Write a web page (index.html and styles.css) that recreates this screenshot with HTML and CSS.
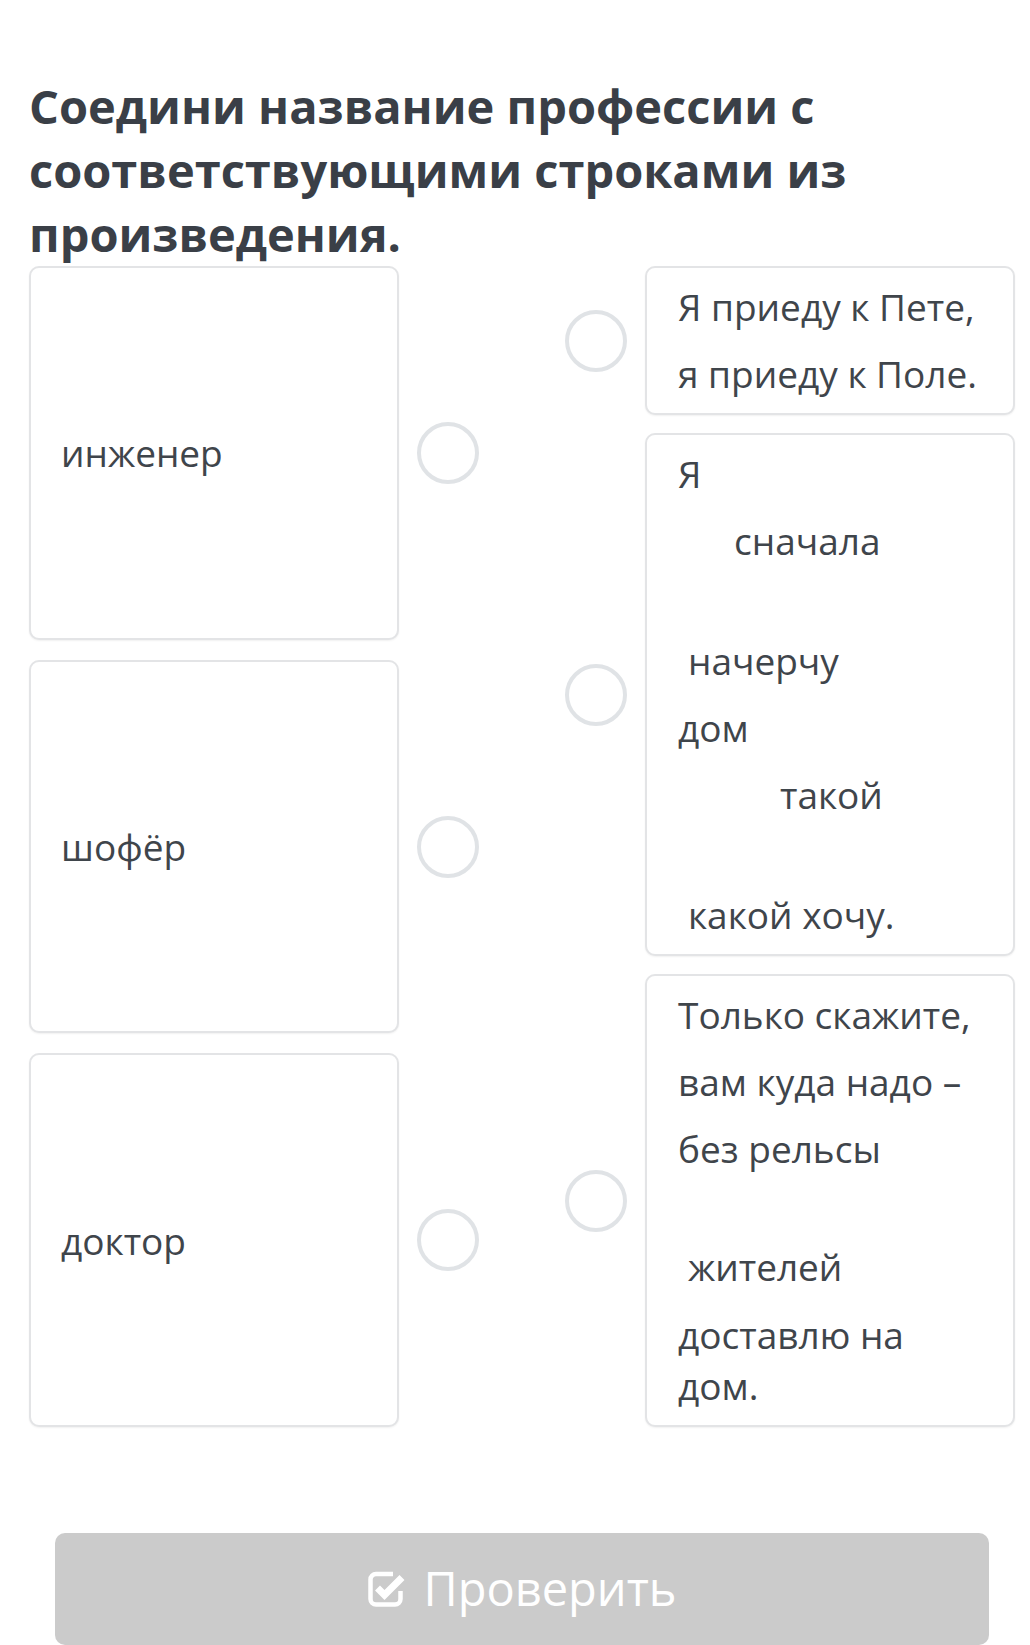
FILE: index.html
```html
<!DOCTYPE html>
<html lang="ru">
<head>
<meta charset="utf-8">
<title>Соедини</title>
<link rel="stylesheet" href="styles.css">
</head>
<body>
<div class="page">
  <h1 class="title">Соедини название профессии с соответствующими строками из произведения.</h1>
  <div class="match">
    <div class="col col-left">
      <div class="item">
        <div class="card card-left"><span>инженер</span></div>
        <div class="dot"></div>
      </div>
      <div class="item">
        <div class="card card-left"><span>шофёр</span></div>
        <div class="dot"></div>
      </div>
      <div class="item">
        <div class="card card-left"><span>доктор</span></div>
        <div class="dot"></div>
      </div>
    </div>
    <div class="col col-right">
      <div class="item">
        <div class="dot dot-r"></div>
        <div class="card card-right">
          <p class="ln">Я приеду к Пете,</p>
          <p class="ln">я приеду к Поле.</p>
        </div>
      </div>
      <div class="item">
        <div class="dot dot-r"></div>
        <div class="card card-right">
          <p class="ln">Я</p>
          <p class="ln ind-l gap">сначала</p>
          <p class="ln ind-s">начерчу</p>
          <p class="ln">дом</p>
          <p class="ln ind-xl gap">такой</p>
          <p class="ln ind-s">какой хочу.</p>
        </div>
      </div>
      <div class="item">
        <div class="dot dot-r"></div>
        <div class="card card-right">
          <p class="ln">Только скажите,</p>
          <p class="ln">вам куда надо –</p>
          <p class="ln gap2">без рельсы</p>
          <p class="ln ind-s">жителей</p>
          <p class="ln wrap">доставлю на дом.</p>
        </div>
      </div>
    </div>
  </div>
  <button class="check" type="button">
    <svg class="check-icon" width="40" height="38" viewBox="0 0 40 38" aria-hidden="true">
      <path d="M26 4 H9 a5.5 5.5 0 0 0 -5.5 5.5 V29 a5.5 5.5 0 0 0 5.5 5.5 H28 a5.5 5.5 0 0 0 5.5 -5.5 V21" fill="none" stroke="#fff" stroke-width="4.5"/>
      <path d="M10.5 18 L17.5 25 L35 7.5" fill="none" stroke="#fff" stroke-width="7" stroke-linecap="butt" stroke-linejoin="miter"/>
    </svg>
    <span>Проверить</span>
  </button>
</div>
</body>
</html>
```

FILE: styles.css
```css
* { box-sizing: border-box; }
html, body { margin: 0; padding: 0; background: #fff; }
body {
  font-family: "Open Sans", "Noto Sans", "DejaVu Sans", sans-serif;
  color: #3f454b;
}
.page {
  padding: 74px 15px 0 29px;
  width: 1030px;
}
.title {
  margin: 0;
  font-size: 47px;
  line-height: 64px;
  font-weight: 700;
  color: #3a3f47;
  width: 920px;
}
.match {
  display: flex;
  gap: 86px;
  align-items: stretch;
}
.col {
  display: flex;
  flex-direction: column;
  width: 450px;
}
.col-left { gap: 20px; }
.col-right { gap: 18px; }
.col-left .item { flex: 1; }
.item {
  display: flex;
  align-items: center;
}
.col-left .item { align-items: stretch; }
.col-left .dot { align-self: center; margin-left: 18px; }
.dot-r { margin-right: 18px; }
.card {
  width: 370px;
  flex: none;
  border: 2px solid #e3e4e6;
  border-radius: 10px;
  background: #fff;
  box-shadow: 0 1px 2px rgba(0,0,0,0.06);
  font-size: 37px;
}
.card-left {
  display: flex;
  align-items: center;
  padding: 0 30px;
}
.card-right {
  padding: 14px 30px 14px 31px;
}
.ln {
  margin: 0 0 17px;
  line-height: 50px;
  white-space: nowrap;
}
.ln:last-child { margin-bottom: 0; }
.ln.wrap { white-space: normal; line-height: 51px; }
.ln.gap { margin-bottom: 70px; }
.ln.gap2 { margin-bottom: 68px; }
.ind-s { padding-left: 10px; }
.ind-l { padding-left: 56px; }
.ind-xl { padding-left: 102px; }
.dot {
  width: 62px;
  height: 62px;
  flex: none;
  border: 4px solid #e0e3e6;
  border-radius: 50%;
  background: #fff;
}
.check {
  display: flex;
  align-items: center;
  justify-content: center;
  gap: 16px;
  margin: 106px 0 0 26px;
  width: 934px;
  height: 112px;
  border: none;
  border-radius: 10px;
  background: #cbcbcb;
  color: #fff;
  font-family: "Open Sans", "Noto Sans", sans-serif;
  font-size: 47px;
  padding: 0 0 2px;
}
.check-icon { flex: none; margin-top: 2px; }
```
